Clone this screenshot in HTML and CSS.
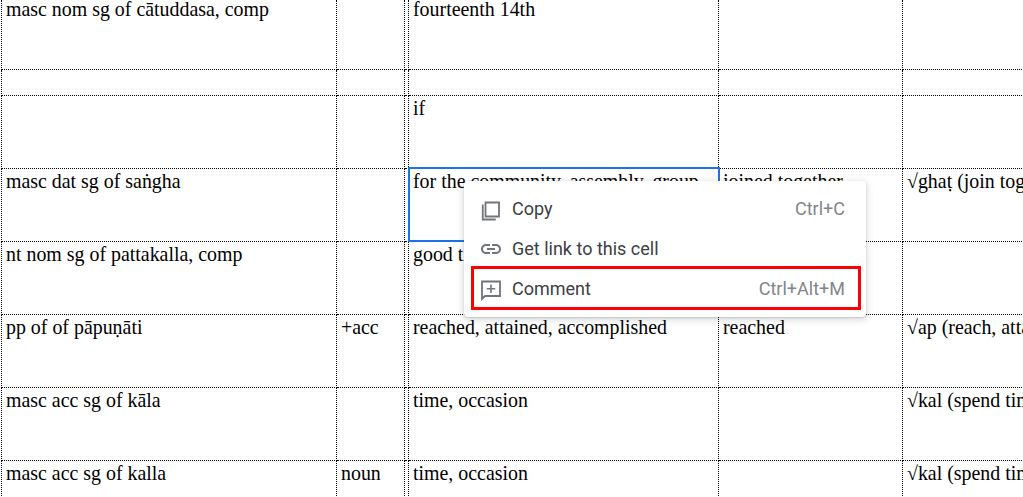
FILE: index.html
```html
<!DOCTYPE html>
<html lang="en">
<head>
<meta charset="utf-8">
<title>Sheet</title>
<link rel="stylesheet" href="styles.css">
</head>
<body>
<table class="sheet">
  <colgroup><col class="c1"><col class="c2"><col class="c3"><col class="c4"><col class="c5"><col class="c6"></colgroup>
  <tr class="first"><td>masc nom sg of cātuddasa, comp</td><td></td><td></td><td>fourteenth 14th</td><td></td><td></td></tr>
  <tr class="thin"><td></td><td></td><td></td><td></td><td></td><td></td></tr>
  <tr><td></td><td></td><td></td><td>if</td><td></td><td></td></tr>
  <tr><td>masc dat sg of saṅgha</td><td></td><td></td><td class="selected">for the community, assembly, group</td><td>joined together</td><td>√ghaṭ (join together)</td></tr>
  <tr><td>nt nom sg of pattakalla, comp</td><td></td><td></td><td>good time</td><td></td><td></td></tr>
  <tr><td>pp of of pāpuṇāti</td><td>+acc</td><td></td><td>reached, attained, accomplished</td><td>reached</td><td>√ap (reach, attain)</td></tr>
  <tr><td>masc acc sg of kāla</td><td></td><td></td><td>time, occasion</td><td></td><td>√kal (spend time)</td></tr>
  <tr class="last"><td>masc acc sg of kalla</td><td>noun</td><td></td><td>time, occasion</td><td></td><td>√kal (spend time)</td></tr>
</table>

<div class="menu">
  <div class="item">
    <svg class="icon" viewBox="0 0 24 24"><path class="line" d="M6.5 7v-1.5h13.5v14h-13.5z M3.75 7.5v15h13"/></svg>
    <span class="label">Copy</span><span class="key">Ctrl+C</span>
  </div>
  <div class="item">
    <svg class="icon" viewBox="0 0 24 24"><path class="fill" d="M3.9 12c0-1.71 1.39-3.1 3.1-3.1h4V7H7c-2.76 0-5 2.24-5 5s2.24 5 5 5h4v-1.9H7c-1.71 0-3.1-1.39-3.1-3.1zM8 13h8v-2H8v2zm9-6h-4v1.9h4c1.71 0 3.1 1.39 3.1 3.1s-1.39 3.1-3.1 3.1h-4V17h4c2.76 0 5-2.24 5-5s-2.24-5-5-5z"/></svg>
    <span class="label">Get link to this cell</span>
  </div>
  <div class="item">
    <svg class="icon" viewBox="0 0 24 24"><path class="line" d="M3 4.5h18v14.5h-15l-3 3z"/><path class="fill" d="M11.2 7.5h1.6v3.4h3.4v1.6h-3.4v3.4h-1.6v-3.4h-3.4v-1.6h3.4z"/></svg>
    <span class="label">Comment</span><span class="key">Ctrl+Alt+M</span>
  </div>
  <div class="highlight"></div>
</div>
</body>
</html>
```
FILE: styles.css
```css
html, body {
  margin: 0;
  padding: 0;
  background: #fff;
}
body {
  width: 1023px;
  height: 497px;
  overflow: hidden;
  position: relative;
}
.sheet {
  border-collapse: collapse;
  table-layout: fixed;
  width: 1022px;
  margin-left: 1px;
  font-family: "Liberation Serif", serif;
  font-size: 19.9px;
  line-height: 22px;
  color: #000;
}
.c1 { width: 335px; }
.c2 { width: 68px; }
.c3 { width: 4px; }
.c4 { width: 310px; }
.c5 { width: 184px; }
.c6 { width: 121px; }
.sheet td {
  height: 73px;
  box-sizing: border-box;
  padding: 1px 4px 0;
  vertical-align: top;
  white-space: nowrap;
  overflow: hidden;
  border-right: 1px dotted #000;
  border-left: 1px dotted #000;
  border-bottom: 1px dotted #000;
}
.sheet td:last-child { border-right: 0; }
.sheet .first td {
  height: 69px;
  padding-top: 0;
  line-height: 19px;
}
.sheet .thin td { height: 26px; }
.sheet .last td {
  height: 36px;
  border-bottom: 0;
}
.sheet td.selected {
  outline: 2px solid #1a73e8;
  outline-offset: -1px;
}
.menu {
  position: absolute;
  left: 464px;
  top: 181px;
  width: 402px;
  box-sizing: border-box;
  padding: 8px 0;
  background: #fff;
  border-radius: 4px;
  box-shadow: 0 2px 6px 2px rgba(60, 64, 67, .15), 0 1px 2px rgba(60, 64, 67, .2);
  font-family: Roboto, sans-serif;
  font-size: 18px;
  color: #3c4043;
}
.item {
  display: flex;
  align-items: center;
  height: 40px;
  padding: 0 21px 0 15px;
}
.icon {
  width: 24px;
  height: 24px;
  flex: none;
  margin-right: 9px;
}
.line { fill: none; stroke: #70757a; stroke-width: 1.8; }
.fill { fill: #70757a; }
.label { flex: 1; padding-bottom: 2px; }
.key { color: #80868b; padding-bottom: 2px; }
.highlight {
  position: absolute;
  left: 7px;
  top: 85px;
  width: 390px;
  height: 44px;
  box-sizing: border-box;
  border: 3px solid #f00;
}
```
